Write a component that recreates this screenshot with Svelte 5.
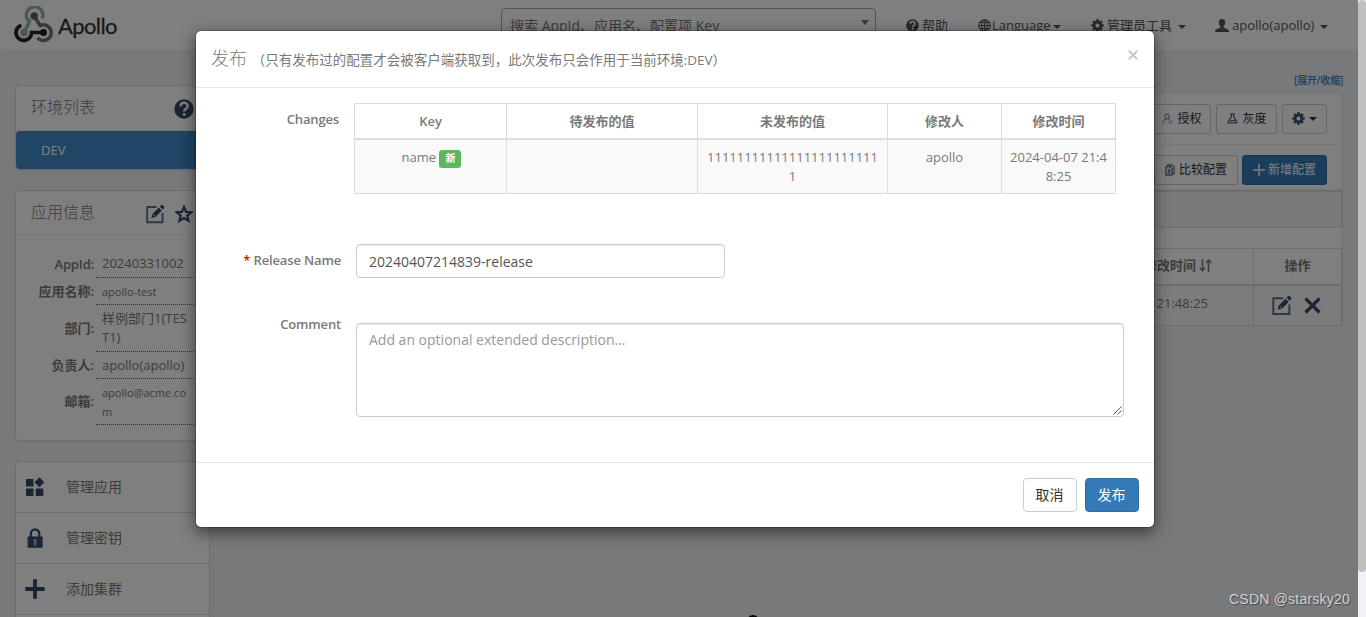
<script>
  const info = [
    { label: 'AppId:', value: '20240331002', h: 27 },
    { label: '应用名称:', value: 'apollo-test', small: true, h: 27 },
    { label: '部门:', value: '样例部门1(TEST1)', h: 47 },
    { label: '负责人:', value: 'apollo(apollo)', h: 27 },
    { label: '邮箱:', value: 'apollo@acme.com', small: true, h: 46 }
  ];
  const changes = [
    { key: 'name', oldValue: '', newValue: '111111111111111111111111', by: 'apollo', time: '2024-04-07 21:48:25' }
  ];
</script>

{#snippet edit(size)}
  <svg width={size} height={size} viewBox="0 0 20 20" fill="none">
    <path d="M11.5 3H2.2v15.2h15.3V9" stroke="#60708a" stroke-width="1.9" />
    <path d="M6.4 13.9l1.1-4 6.3-6.3 3 3-6.3 6.3z" fill="#34496a" />
    <path d="M14.8 2.6l1.3-1.3q.9-.8 1.8 0l1.1 1.1q.8.9 0 1.8l-1.3 1.3z" fill="#34496a" />
    <path d="M8 12.3l1.2-1.8 1 1z" fill="#fff" />
  </svg>
{/snippet}

{#snippet help(size, color)}
  <svg width={size} height={size} viewBox="0 0 20 20">
    <circle cx="10" cy="10" r="9.7" fill={color} />
    <path d="M6.5 7.4C6.6 2.6 13.9 2.8 13.7 7.2c-.1 2.400-3.500 2.600-3.500 5.300" fill="none" stroke="#fff" stroke-width="2.5" />
    <rect x="8.8" y="14" width="2.8" height="2.7" rx=".7" fill="#fff" />
  </svg>
{/snippet}

{#snippet gear(size, color)}
  <svg width={size} height={size} viewBox="0 0 20 20">
    <circle cx="10" cy="10" r="5.2" fill="none" stroke={color} stroke-width="4.2" />
    <g stroke={color} stroke-width="4.2">
      <path d="M10 .5v4M10 15.500v4M.5 10h4M15.500 10h4M3.300 3.300l2.800 2.800M13.900 13.900l2.800 2.800M3.300 16.700l2.800-2.800M13.900 6.100l2.800-2.800" />
    </g>
  </svg>
{/snippet}

<div class="screen">
  <div class="page">
    <header class="nav">
      <div class="brand">
        <svg width="40" height="38" viewBox="14 6 40 38" fill="none">
          <path d="M42 18.800A8.300 8.300 0 1 0 29.500 21.500L24.500 32" stroke="#93b3a4" stroke-width="3.400" />
          <path d="M34.200 16L40.200 25.600A7.800 7.800 0 1 1 37.600 37.800" stroke="#707070" stroke-width="3.500" />
          <path d="M21.300 25.200A7.800 7.800 0 1 0 31.600 32.500H43" stroke="#222" stroke-width="3.700" />
          <circle cx="34.200" cy="16" r="3.700" fill="#5c5c5c" />
          <circle cx="24" cy="32.500" r="3.700" fill="#93b3a4" />
          <circle cx="43.500" cy="32.500" r="3.500" fill="#1c1c1c" />
        </svg>
        <span>Apollo</span>
      </div>
      <div class="search"><span>搜索 AppId、应用名、配置项 Key</span><i class="caret big"></i></div>
      <nav>
        <span class="n1">{@render help(13, '#555')}帮助</span>
        <span class="n2">
          <svg width="13" height="13" viewBox="0 0 14 14" fill="none" stroke="#555" stroke-width="1.200"><circle cx="7" cy="7" r="6.200" /><ellipse cx="7" cy="7" rx="3" ry="6.200" /><path d="M7 1v12M1 7h12M2 3.800h10M2 10.200h10" /></svg>Language<i class="caret"></i>
        </span>
        <span class="n3">{@render gear(13, '#555')}管理员工具 <i class="caret"></i></span>
        <span class="n4">
          <svg width="14" height="13" viewBox="0 0 14 13" fill="#555"><path d="M7 0C4.700 0 3.700 1.700 3.900 3.900c.1 1.500.8 2.700 1.500 3.500v1.200L.8 10.700Q0 11.200 0 13h14q0-1.800-.8-2.300L8.600 8.600V7.400c.7-.8 1.400-2 1.500-3.500C10.300 1.700 9.300 0 7 0z" /></svg>apollo(apollo) <i class="caret"></i>
        </span>
      </nav>
    </header>

    <div class="body">
      <aside>
        <section class="panel env">
          <div class="phead"><h2>环境列表</h2>{@render help(20, '#34496a')}</div>
          <div class="active">DEV</div>
        </section>
        <section class="panel info">
          <div class="phead">
            <h2>应用信息</h2>
            {@render edit(20)}
            <svg class="star" width="18" height="18" viewBox="0 0 18 18"><path d="M9 2l2.100 4.900 5.200.4-4 3.400 1.300 5.100L9 13.100l-4.600 2.700 1.300-5.100-4-3.400 5.200-.4z" fill="none" stroke="#34496a" stroke-width="2.200" /></svg>
          </div>
          <div class="rows">
            {#each info as row}
              <div class="row" style="height:{row.h}px">
                <b>{row.label}</b><span class:small={row.small}>{row.value}</span>
              </div>
            {/each}
          </div>
        </section>
        <section class="panel links">
          <div class="link">
            <svg width="20" height="20" viewBox="0 0 20 20" fill="#34496a"><path d="M1 2h7.500v7.500H1zM1 11.500h7.500V19H1zM10.800 11.500h7.500V19h-7.500zM14.400.3l4.900 5-4.900 4.900-4.900-4.900z" /></svg>
            <span>管理应用</span>
          </div>
          <div class="link">
            <svg width="20" height="20" viewBox="0 0 20 20"><path d="M5.900 9.500V5.600a4.200 4.200 0 0 1 8.400 0v3.900" fill="none" stroke="#34496a" stroke-width="2.200" /><rect x="2.600" y="8.500" width="15" height="11.300" rx=".8" fill="#34496a" /><path d="M8.600 11h3v3.200l-.5 3.300h-2l-.5-3.300z" fill="#a5aebb" /></svg>
            <span>管理密钥</span>
          </div>
          <div class="link">
            <svg width="20" height="20" viewBox="0 0 20 20"><path d="M10 .3v19.400M.3 10h19.400" stroke="#34496a" stroke-width="3.800" /></svg>
            <span>添加集群</span>
          </div>
          <div class="link"></div>
        </section>
      </aside>

      <main>
        <a class="toggle" href="#top">[展开/收缩]</a>
        <div class="ns">
          <div class="bar">
            <span class="btn auth">
              <svg width="11" height="11" viewBox="0 0 12 12" fill="none" stroke="#52637f"><circle cx="5.500" cy="3.800" r="2.600" /><path d="M1 11.500c.2-2.700 1.500-4 3.300-4.700M7 6.500l1.500 2M7.600 10l1.300 1.200L11.500 9" /></svg>授权</span>
            <span class="btn gray">
              <svg width="11" height="11" viewBox="0 0 12 12" fill="none" stroke="#52637f" stroke-width="1.400"><path d="M3.500 1h5M4.700 1v3.400L1.300 9.500v1.300h9.400V9.500L7.300 4.400V1M3.300 8.300h5.500" /></svg>灰度</span>
            <span class="btn cog">{@render gear(13, '#3c5373')}<i class="caret dark"></i></span>
          </div>
          <div class="bar second">
            <span class="btn compare">
              <svg width="10" height="12" viewBox="0 0 11 13" fill="none" stroke="#52637f" stroke-width="1.300"><path d="M1 2.800h4.600l2.200 2v7.400H1zM3 2.500V.8h4.500l2.500 2v8H8M3 6h3M3 8h3M3 10h3" /></svg>比较配置</span>
            <span class="btn add">
              <svg width="12" height="12" viewBox="0 0 12 12"><path d="M6 0v12M0 6h12" stroke="#ddd" stroke-width="2" /></svg>新增配置</span>
          </div>
          <div class="band"></div>
          <div class="gap"></div>
          <div class="items">
            <div class="ih time">最后修改时间
              <svg width="13" height="13" viewBox="0 0 13 13" fill="none" stroke="#797979" stroke-width="1.500"><path d="M3.500 0v12M.5 8.500l3 3.200 2.500-3M9.500 13V1M7 4l2.500-3 3 3" /></svg>
            </div>
            <div class="ih">操作</div>
            <div class="id time">2024-04-07 21:48:25</div>
            <div class="id ops">{@render edit(21)}
              <svg width="17" height="17" viewBox="0 0 17 17"><path d="M1.500 1.500l14 14M15.500 1.500l-14 14" stroke="#34496a" stroke-width="3.200" /></svg>
            </div>
          </div>
        </div>
      </main>
    </div>
  </div>

  <div class="foot"><i></i></div>
  <div class="backdrop"></div>

  <div class="modal" role="dialog">
    <div class="mhead">
      <h1>发布 <small>（只有发布过的配置才会被客户端获取到，此次发布只会作用于当前环境:DEV）</small></h1>
      <svg class="close" width="10" height="10" viewBox="0 0 10 10"><path d="M.8.8l8.400 8.400M9.200.8L.8 9.200" stroke="#c8c8c8" stroke-width="2" /></svg>
    </div>
    <div class="mbody">
      <div class="field changes">
        <b>Changes</b>
        <table>
          <colgroup><col style="width:152px" /><col style="width:191px" /><col style="width:190px" /><col style="width:114px" /><col style="width:114px" /></colgroup>
          <thead><tr><th>Key</th><th>待发布的值</th><th>未发布的值</th><th>修改人</th><th>修改时间</th></tr></thead>
          <tbody>
            {#each changes as c}
              <tr><td>{c.key} <span class="tag">新</span></td><td>{c.oldValue}</td><td>{c.newValue}</td><td>{c.by}</td><td>{c.time}</td></tr>
            {/each}
          </tbody>
        </table>
      </div>
      <div class="field name">
        <b><em>*</em> Release Name</b>
        <div class="input">20240407214839-release</div>
      </div>
      <div class="field comment">
        <b>Comment</b>
        <div class="area">Add an optional extended description...
          <svg class="grip" width="9" height="9" viewBox="0 0 9 9"><path d="M.5 8.500l8-8M4.500 8.500l4-4" stroke="#555" stroke-width="1" /></svg>
        </div>
      </div>
    </div>
    <div class="mfoot">
      <button class="cancel">取消</button>
      <button class="ok">发布</button>
    </div>
  </div>

  <div class="scroll"><div></div></div>
  <div class="mark">CSDN @starsky20</div>
</div>

<style>
  :global(body) { margin: 0; }
  .screen { position: relative; width: 1366px; height: 617px; overflow: hidden; background: #f1f2f7; color: #797979; font: 13px/19px "Open Sans", "Noto Sans CJK SC", sans-serif; }
  .screen :global(*) { box-sizing: border-box; }
  svg { flex: none; display: block; }
  .page { width: 1358px; height: 617px; overflow: hidden; }
  .nav { height: 50px; background: #fff; border-radius: 0 0 4px 4px; display: flex; align-items: flex-start; color: #555; }
  .brand { display: flex; width: 501px; padding: 6px 0 0 14px; }
  .brand span { font: 22px/40px Lato, sans-serif; color: #333; margin-left: 4px; letter-spacing: -.6px; -webkit-text-stroke: .3px #333; }
  .search { width: 375px; height: 34px; margin-top: 8px; border: 1px solid #aaa; border-radius: 4px; padding: 7px 6px 0 8px; display: flex; justify-content: space-between; font-size: 14px; color: #777; }
  nav { display: flex; padding-top: 16px; }
  nav span { display: flex; align-items: center; height: 19px; }
  .n1 { margin-left: 30px; gap: 3px; width: 72px; }
  .n2 { gap: 1px; width: 113px; }
  .n3 { gap: 3px; width: 124px; }
  .n4 { gap: 3px; white-space: nowrap; }
  .caret { border: 4px solid transparent; border-top-color: #555; border-bottom: 0; margin-left: 3px; margin-top: 2px; }
  .n2 .caret { margin-left: 1px; }
  .n3 .caret { margin-left: 3px; }
  .caret.big { margin-top: 4px; border-width: 5px 4px 0; border-top-color: #777; }
  .caret.dark { border-top-color: #333; margin: 0; }
  .body { display: flex; }
  aside { width: 210px; padding: 35px 0 0 15px; flex: none; }
  .panel { background: #fff; border: 1px solid #ddd; border-radius: 4px; box-shadow: 0 1px 1px rgba(0,0,0,.05); }
  .phead { height: 44px; padding: 3px 16px 0 15px; display: flex; align-items: center; border-bottom: 1px solid #eee; }
  h2 { flex: 1; margin: 0; font-size: 16px; font-weight: 300; }
  .env { height: 85px; margin-bottom: 20px; }
  .env .phead { padding-right: 15px; height: 45px; padding-top: 2px; }
  .env h2 { margin-top: -3px; }
  .info h2 { margin-top: -3px; }
  .active { height: 38px; background: #428bca; border-radius: 4px; color: #fff; padding: 10px 25px; }
  .info { height: 251px; margin-bottom: 20px; }
  .info .star { margin-left: 10px; }
  .rows { padding: 16px 15px 0 0; }
  .row { display: flex; align-items: center; }
  .row b { width: 80px; padding-right: 2px; text-align: right; margin-top: -1px; }
  .row:first-child b { letter-spacing: -.15px; margin-top: 0; }
  .row span { flex: 1; align-self: stretch; padding: 4px 5px 0 6px; border-bottom: 1px dotted #666; word-break: break-all; }
  .row:first-child span { padding-top: 3px; }
  .row .small { font-size: 11px; padding-top: 4px; }
  .links { margin-bottom: -80px; }
  .link { height: 51px; border-bottom: 1px solid #ddd; display: flex; align-items: center; padding-left: 9px; gap: 21px; font-size: 14px; }
  .link span { margin-top: -2px; }
  b, th, .ih { font-weight: 600; }
  main { flex: 1; padding: 21px 15px 0 15px; min-width: 0; }
  .toggle { display: block; text-align: right; font-size: 10px; line-height: 19px; color: #337ab7; text-decoration: none; -webkit-text-stroke: .2px; margin-bottom: 4px; letter-spacing: -.2px; }
  .ns { background: #fff; border-right: 1px solid #ddd; }
  .bar { height: 51px; display: flex; justify-content: flex-end; gap: 5px; padding: 10px 15px 0; border-bottom: 1px solid #eee; }
  .bar.second { height: 45px; gap: 4px; }
  .btn { height: 30px; border: 1px solid #ccc; border-radius: 3px; display: flex; align-items: center; justify-content: center; gap: 4px; font-size: 12px; color: #333; padding-bottom: 1px; }
  .auth { width: 60px; padding-left: 2px; } .gray { width: 61px; padding-left: 1px; } .cog { width: 45px; }
  .compare { width: 84px; } .add { width: 85px; background: #337ab7; border-color: #2e6da4; color: #fff; gap: 3px; }
  .band { height: 38px; background: #f5f5f5; border: 1px solid #ddd; border-top-width: 2px; border-left: 0; }
  .gap { height: 20px; }
  .items { display: grid; grid-template-columns: 1fr 88px; border-bottom: 1px solid #ddd; }
  .ih { height: 38px; border: 1px solid #ddd; border-width: 1px 1px 2px 0; display: flex; align-items: center; justify-content: center; padding-bottom: 2px; }
  .id { height: 39px; background: #f9f9f9; border-right: 1px solid #ddd; display: flex; align-items: center; }
  .ih.time { justify-content: flex-end; padding-right: 41px; gap: 3px; }
  .id.time { justify-content: flex-end; padding: 0 45px 4px 0; }
  .ops { justify-content: center; gap: 12px; padding-right: 4px; }
  .foot { position: absolute; left: 747px; top: 615px; }
  .foot i { display: block; width: 12px; height: 12px; border-radius: 50%; background: #000; }
  .backdrop { position: absolute; inset: 0 8px 0 0; background: rgba(0,0,0,.5); }
  .modal { position: absolute; left: 195px; top: 30px; width: 960px; height: 498px; background: #fff; background-clip: padding-box; border: 1px solid rgba(0,0,0,.2); border-radius: 6px; box-shadow: 0 5px 15px rgba(0,0,0,.5); display: flex; flex-direction: column; }
  .mhead { height: 57px; padding: 14px 15px; border-bottom: 1px solid #e5e5e5; display: flex; justify-content: space-between; }
  h1 { margin: 0; font-size: 18px; line-height: 26px; font-weight: 300; }
  small { font-size: 13.5px; font-weight: 400; }
  .close { margin: 5px 1px 0 0; }
  .mbody { flex: 1; padding: 15px 0 0; }
  .field { display: flex; }
  .field > b { width: 145px; text-align: right; flex: none; letter-spacing: -.15px; }
  .changes { height: 91px; }
  .changes > b { margin: 7px 15px 0 -2px; }
  table { width: 762px; height: 91px; table-layout: fixed; border-collapse: collapse; text-align: center; }
  th, td { border: 1px solid #ddd; word-break: break-all; }
  th { height: 35px; padding: 7px 8px 6px; line-height: 19px; border-bottom-width: 2px; }
  td { background: #f9f9f9; height: 54px; vertical-align: top; padding: 8px 7px 7px; }
  td:first-child { padding-left: 9px; }
  .tag { display: inline-block; background: #5cb85c; color: #fff; font-weight: 700; font-size: 10px; line-height: 17px; height: 18px; width: 22px; border-radius: 3px; vertical-align: top; margin-top: 2px; }
  .name { margin-top: 50px; }
  .name > b, .comment > b { margin-right: 15px; }
  .name > b { padding-top: 7px; }
  em { color: red; font-style: normal; }
  .input { width: 369px; height: 34px; border: 1px solid #ccc; border-radius: 4px; padding: 7px 12px; font-size: 14px; color: #555; box-shadow: inset 0 1px 1px rgba(0,0,0,.075); }
  .comment { margin-top: 45px; }
  .comment > b { height: 19px; margin-top: -8px; }
  .area { position: relative; width: 768px; height: 94px; border: 1px solid #ccc; border-radius: 4px; padding: 6px 12px; font-size: 14px; color: #999; box-shadow: inset 0 1px 1px rgba(0,0,0,.075); }
  .grip { position: absolute; right: 1px; bottom: 1px; }
  .mfoot { height: 65px; border-top: 1px solid #e5e5e5; padding: 15px; display: flex; justify-content: flex-end; gap: 8px; }
  button { width: 54px; height: 34px; border-radius: 4px; border: 1px solid #ccc; background: #fff; color: #333; font: 14px/20px "Open Sans", "Noto Sans CJK SC", sans-serif; padding: 0 1px 1px 0; }
  .ok { background: #337ab7; border-color: #2e6da4; color: #fff; }
  .scroll { position: absolute; right: 0; top: 0; width: 8px; height: 617px; background: #f1f2f7; }
  .scroll div { height: 572px; border-radius: 4px; background: #bfbfbf; }
  .mark { position: absolute; right: 16px; top: 590px; font: 14px/19px "Liberation Sans", sans-serif; color: #d3d3d3; text-shadow: 1px 1px 1px #444; white-space: nowrap; letter-spacing: .22px; }
</style>
